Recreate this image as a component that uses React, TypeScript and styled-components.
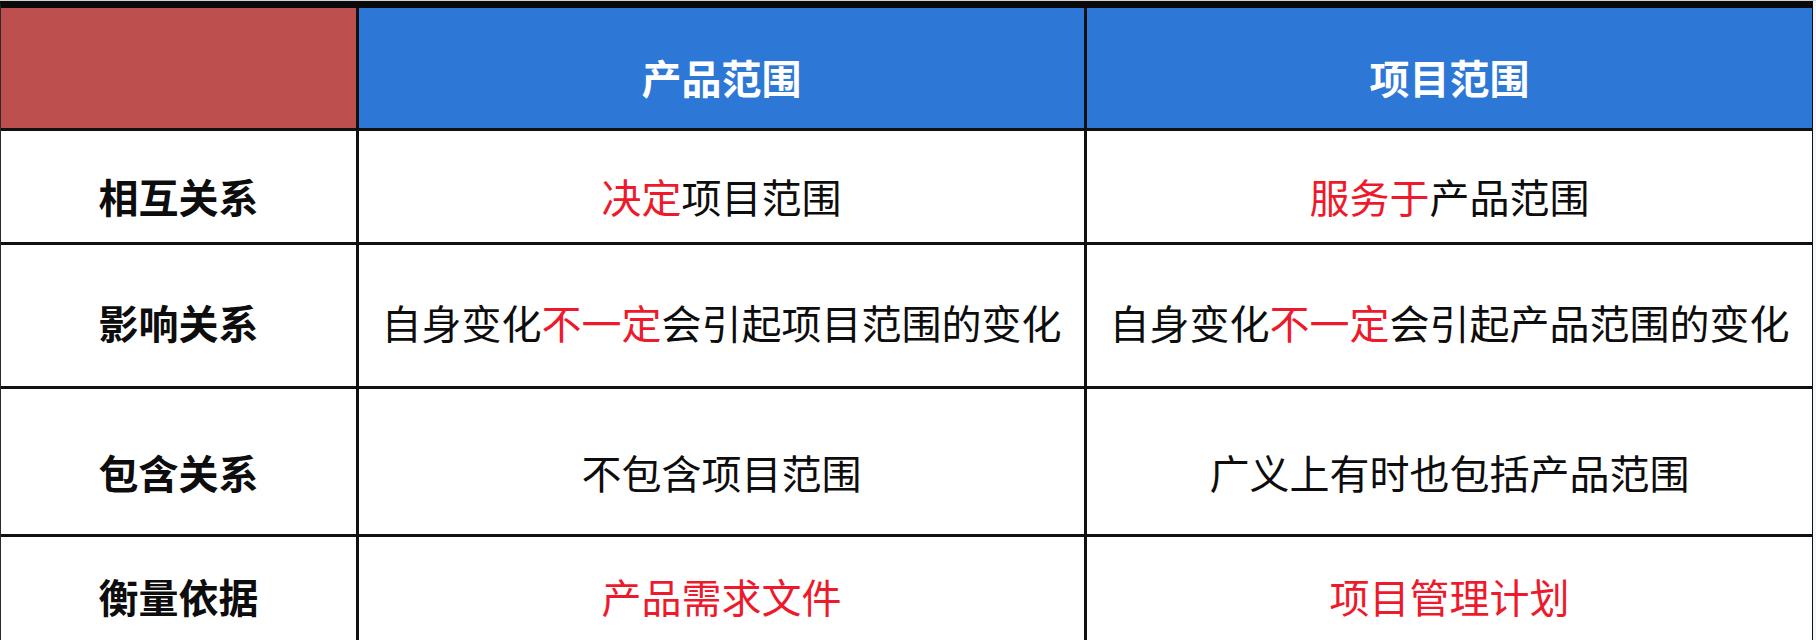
import React from "react";
import styled, { createGlobalStyle } from "styled-components";

const Global = createGlobalStyle`
  html, body { margin: 0; padding: 0; background: #ffffff; }
  body { width: 1816px; height: 640px; overflow: hidden; font-family: "Noto Sans CJK SC", "Noto Sans", sans-serif; }
`;

const Page = styled.div`
  width: 1816px;
  height: 640px;
  overflow: hidden;
  border-top: 1px solid #d4d4d4;
  box-sizing: border-box;
  background: #f4f6f8;
`;

const Table = styled.div`
  width: 1812px;
  display: grid;
  grid-template-columns: 355px 725px 725px;
  grid-template-rows: 120px 111px 141px 145px 110px;
  gap: 3px;
  background: #111111;
  border-top: 7px solid #0a0a0a;
  border-left: 1px solid #2a2a2a;
  box-sizing: content-box;
`;

const Cell = styled.div<{ $bg?: string; $bold?: boolean; $color?: string; $shift?: number }>`
  background: ${(p) => p.$bg ?? "#ffffff"};
  color: ${(p) => p.$color ?? "#0d0d0d"};
  font-family: "Noto Sans CJK SC", "Noto Sans", sans-serif;
  font-size: 40px;
  font-weight: ${(p) => (p.$bold ? 700 : 400)};
  line-height: 1.2;
  display: flex;
  align-items: center;
  justify-content: center;
  padding-top: ${(p) => p.$shift ?? 18}px;
  box-sizing: border-box;
  white-space: nowrap;
`;

const Red = styled.span`
  color: #ee1a2c;
`;

const rows: { label: string; a: React.ReactNode; b: React.ReactNode; shift?: number }[] = [
  {
    label: "相互关系",
    a: (
      <>
        <Red>决定</Red>项目范围
      </>
    ),
    b: (
      <>
        <Red>服务于</Red>产品范围
      </>
    ),
  },
  {
    label: "影响关系",
    a: (
      <>
        自身变化<Red>不一定</Red>会引起项目范围的变化
      </>
    ),
    b: (
      <>
        自身变化<Red>不一定</Red>会引起产品范围的变化
      </>
    ),
    shift: 12,
  },
  {
    label: "包含关系",
    a: <>不包含项目范围</>,
    b: <>广义上有时也包括产品范围</>,
    shift: 20,
  },
  {
    label: "衡量依据",
    a: <Red>产品需求文件</Red>,
    b: <Red>项目管理计划</Red>,
    shift: 8,
  },
];

export default function App() {
  return (
    <>
      <Global />
      <Page>
        <Table>
          <Cell $bg="#bd504e" />
          <Cell $bg="#2d78d6" $color="#ffffff" $bold>
            产品范围
          </Cell>
          <Cell $bg="#2d78d6" $color="#ffffff" $bold>
            项目范围
          </Cell>
          {rows.map((r) => (
            <React.Fragment key={r.label}>
              <Cell $bold $shift={r.shift}>{r.label}</Cell>
              <Cell $shift={r.shift}>{r.a}</Cell>
              <Cell $shift={r.shift}>{r.b}</Cell>
            </React.Fragment>
          ))}
        </Table>
      </Page>
    </>
  );
}
